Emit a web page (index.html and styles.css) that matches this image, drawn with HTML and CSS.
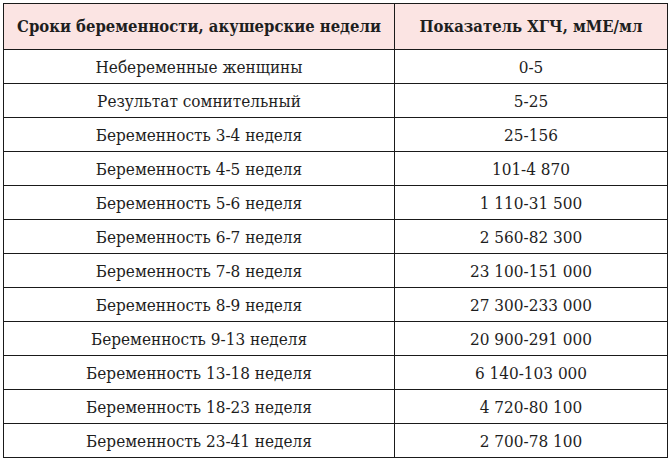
FILE: index.html
```html
<!DOCTYPE html>
<html lang="ru">
<head>
<meta charset="utf-8">
<link rel="stylesheet" href="styles.css">
</head>
<body>
<table class="hcg">
  <thead>
    <tr><th class="c1">Сроки беременности, акушерские недели</th><th class="c2">Показатель ХГЧ, мМЕ/мл</th></tr>
  </thead>
  <tbody>
    <tr><td>Небеременные женщины</td><td>0-5</td></tr>
    <tr><td>Результат сомнительный</td><td>5-25</td></tr>
    <tr><td>Беременность 3-4 неделя</td><td>25-156</td></tr>
    <tr><td>Беременность 4-5 неделя</td><td>101-4 870</td></tr>
    <tr><td>Беременность 5-6 неделя</td><td>1 110-31 500</td></tr>
    <tr><td>Беременность 6-7 неделя</td><td>2 560-82 300</td></tr>
    <tr><td>Беременность 7-8 неделя</td><td>23 100-151 000</td></tr>
    <tr><td>Беременность 8-9 неделя</td><td>27 300-233 000</td></tr>
    <tr><td>Беременность 9-13 неделя</td><td>20 900-291 000</td></tr>
    <tr><td>Беременность 13-18 неделя</td><td>6 140-103 000</td></tr>
    <tr><td>Беременность 18-23 неделя</td><td>4 720-80 100</td></tr>
    <tr><td>Беременность 23-41 неделя</td><td>2 700-78 100</td></tr>
  </tbody>
</table>
</body>
</html>
```
FILE: styles.css
```css
html, body {
  margin: 0;
  padding: 0;
  background: #ffffff;
}
body {
  padding: 3px 0 0 3px;
}
.hcg {
  border-collapse: collapse;
  font-family: "DejaVu Serif Condensed", "DejaVu Serif", serif;
  color: #1e1e1e;
  table-layout: fixed;
  width: 663px;
}
.hcg th, .hcg td {
  border: 1px solid #1a1a1a;
  text-align: center;
  padding: 0;
  white-space: nowrap;
}
.hcg th {
  height: 45px;
  background: #fbe4e3;
  font-size: 16.5px;
  font-weight: bold;
}
.hcg td {
  height: 33px;
  font-size: 17px;
}
.c1 { width: 390px; }
.c2 { width: 272px; }
```
